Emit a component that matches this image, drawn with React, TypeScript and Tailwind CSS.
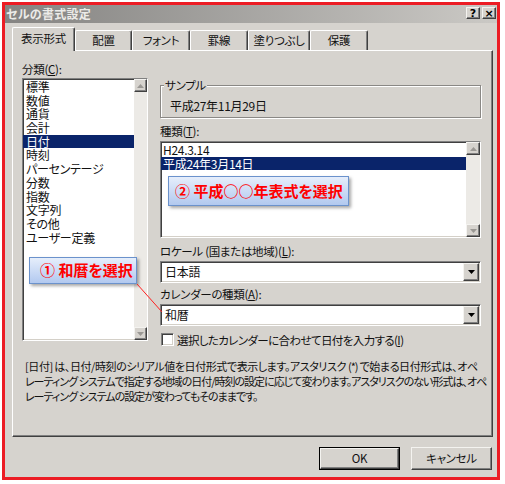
import React from "react";

const sunken =
  "border border-t-[#808080] border-l-[#808080] border-b-white border-r-white shadow-[inset_1px_1px_0_#404040,inset_-1px_-1px_0_#d4d0c8]";
const raised =
  "border border-t-[#f4f3f0] border-l-[#f4f3f0] border-b-[#404040] border-r-[#404040] shadow-[inset_-1px_-1px_0_#808080]";

function Arrow({ up, color }: { up?: boolean; color: string }) {
  return (
    <svg width="7" height="4" viewBox="0 0 7 4">
      {up ? <polygon points="3.5,0 7,4 0,4" fill={color} /> : <polygon points="0,0 7,0 3.5,4" fill={color} />}
    </svg>
  );
}

function ScrollBar({ wClass }: { wClass: string }) {
  return (
    <div className={`${wClass} h-full flex flex-col justify-between bg-[#eceae6]`}>
      <div className={`h-[13px] flex items-center justify-center bg-[#d6d3ce] ${raised}`}>
        <Arrow up color="#9a9894" />
      </div>
      <div className={`h-[13px] flex items-center justify-center bg-[#d6d3ce] ${raised}`}>
        <Arrow color="#9a9894" />
      </div>
    </div>
  );
}

function Combo({ text }: { text: string }) {
  return (
    <div className={`h-[22px] bg-white flex items-center ${sunken}`}>
      <span className="flex-1 pl-[4px] leading-[14px] text-[12px]">{text}</span>
      <div className={`w-[16px] h-[18px] mr-[1px] flex items-center justify-center bg-[#d6d3ce] ${raised}`}>
        <Arrow color="#000" />
      </div>
    </div>
  );
}

function Tab({ w, selected, children }: { w: string; selected?: boolean; children: React.ReactNode }) {
  return (
    <div
      className={`${w} ${
        selected ? "h-[24px] -mb-[1px] relative z-10 pt-[3px]" : "h-[20px] pt-[2px]"
      } bg-[#d6d3ce] border-l border-t border-r border-l-white border-t-white border-r-[#404040] rounded-t-[2px] shadow-[inset_-1px_0_0_#808080] flex justify-center leading-[14px] whitespace-nowrap`}
    >
      {children}
    </div>
  );
}

function TitleBtn({ children }: { children: React.ReactNode }) {
  return (
    <div
      className={`w-[14px] h-[12px] bg-[#d6d3ce] ${raised} flex items-center justify-center text-[11px] font-bold leading-none text-black tracking-normal font-['DejaVu_Sans',sans-serif]`}
    >
      {children}
    </div>
  );
}

const categories = [
  "標準",
  "数値",
  "通貨",
  "会計",
  "日付",
  "時刻",
  "パーセンテージ",
  "分数",
  "指数",
  "文字列",
  "その他",
  "ユーザー定義",
];

export default function App() {
  return (
    <div className="w-[505px] h-[484px] bg-white pt-[2px] pl-[2px] font-['Noto_Sans_CJK_JP',sans-serif] [font-feature-settings:'palt'] text-[11.5px] tracking-[-0.3px] text-[#111]">
      <div className="w-[498px] h-[478px] border-[3px] border-[#ec1c24] bg-[#d6d3ce] flex flex-col relative">
        {/* Title bar */}
        <div className="h-[18px] flex items-center bg-gradient-to-r from-[#858482] to-[#cbc9c5]">
          <span className="flex-1 pl-[1px] text-[12px] font-bold leading-none text-[#ecebe8] tracking-[0.3px]">セルの書式設定</span>
          <div className="flex gap-[2px] mr-[1px] -mt-[2px]">
            <TitleBtn>?</TitleBtn>
            <TitleBtn>×</TitleBtn>
          </div>
        </div>

        {/* Tabs */}
        <div className="flex items-end h-[23px] mt-[4px] ml-[7px]">
          <Tab w="w-[63px]" selected>
            表示形式
          </Tab>
          <Tab w="w-[57px]">配置</Tab>
          <Tab w="w-[58px]">フォント</Tab>
          <Tab w="w-[58px]">罫線</Tab>
          <Tab w="w-[62px]">塗りつぶし</Tab>
          <Tab w="w-[58px]">保護</Tab>
        </div>

        {/* Panel */}
        <div className="ml-[7px] w-[481px] h-[387px] border border-l-white border-t-white border-r-[#404040] border-b-[#404040] shadow-[inset_-1px_-1px_0_#808080] flex flex-col">
          <div className="flex pl-[9px] pt-[11px]">
            {/* Left column */}
            <div className="w-[126px] flex flex-col">
              <div className="h-[14px] leading-[14px]">
                分類(<u>C</u>):
              </div>
              <div className={`mt-[2px] h-[263px] bg-white flex ${sunken}`}>
                <div className="flex-1 pt-[1px] text-[12px]">
                  {categories.map((c) => (
                    <div
                      key={c}
                      className={`h-[13.7px] leading-[13.7px] pl-[3px] whitespace-nowrap ${
                        c === "日付" ? "bg-[#0a246a] text-white" : ""
                      }`}
                    >
                      {c}
                    </div>
                  ))}
                </div>
                <ScrollBar wClass="w-[13px]" />
              </div>
            </div>

            {/* Right column */}
            <div className="ml-[12px] w-[321px] mt-[23px] flex flex-col">
              <div className="relative h-[33px] border border-[#8a8885] shadow-[1px_1px_0_#ffffff,inset_1px_1px_0_#ffffff]">
                <span className="absolute -top-[8px] left-[3px] px-[1px] bg-[#d6d3ce] leading-[14px]">サンプル</span>
                <div className="pt-[13px] pl-[9px] leading-[14px] text-[12px]">平成27年11月29日</div>
              </div>

              <div className="mt-[6px] h-[14px] leading-[14px]">
                種類(<u>T</u>):
              </div>
              <div className={`mt-[3px] h-[97px] bg-white flex ${sunken}`}>
                <div className="flex-1 pt-[1px] text-[12px]">
                  <div className="h-[13.5px] leading-[13.5px] pl-[2px]">H24.3.14</div>
                  <div className="h-[13.5px] leading-[13.5px] pl-[2px] bg-[#0a246a] text-white">平成24年3月14日</div>
                </div>
                <ScrollBar wClass="w-[14px]" />
              </div>

              <div className="mt-[6px] h-[14px] leading-[14px] whitespace-nowrap">
                ロケール (国または地域)(<u>L</u>):
              </div>
              <div className="mt-[3px]">
                <Combo text="日本語" />
              </div>

              <div className="mt-[4px] h-[14px] leading-[14px] whitespace-nowrap">
                カレンダーの種類(<u>A</u>):
              </div>
              <div className="mt-[3px]">
                <Combo text="和暦" />
              </div>

              <div className="mt-[7px] h-[13px] flex items-center">
                <div className={`ml-[1px] w-[13px] h-[13px] bg-white ${sunken}`} />
                <span className="ml-[3px] leading-[14px] whitespace-nowrap tracking-[-0.6px]">
                  選択したカレンダーに合わせて日付を入力する(<u>I</u>)
                </span>
              </div>
            </div>
          </div>

          {/* Description */}
          <div className="ml-[12px] mt-[13px] leading-[15px] whitespace-nowrap text-[11px] tracking-[-1px]">
            <div className="w-[452px] [text-align-last:justify]">
              [日付] は、日付/時刻のシリアル値を日付形式で表示します。アスタリスク (*) で始まる日付形式は、オペ
            </div>
            <div className="w-[452px] [text-align-last:justify]">
              レーティング システムで指定する地域の日付/時刻の設定に応じて変わります。アスタリスクのない形式は、オペ
            </div>
            <div>レーティング システムの設定が変わってもそのままです。</div>
          </div>
        </div>

        {/* Buttons */}
        <div className="mt-[10px] flex justify-end gap-[11px] pr-[5px]">
          <div className="w-[81px] h-[23px] border border-black">
            <div className={`w-full h-full flex items-center justify-center ${raised}`}>OK</div>
          </div>
          <div className={`w-[81px] h-[23px] flex items-center justify-center ${raised}`}>キャンセル</div>
        </div>

        {/* Callout 2 */}
        <div className="absolute left-[163px] top-[171px] w-[181px] h-[30px] border border-[#6b92cc] bg-gradient-to-b from-[#e6eefb] to-[#b2c9ef] shadow-[2px_2px_3px_rgba(0,0,0,0.35)] flex items-center pl-[6px] text-[15px] font-bold text-[#ff0000] whitespace-nowrap tracking-normal">
          ② 平成○○年表式を選択
        </div>

        {/* Callout 1 */}
        <div className="absolute left-[24px] top-[252px] w-[108px] h-[27px] border border-[#6b92cc] bg-gradient-to-b from-[#e6eefb] to-[#b2c9ef] shadow-[2px_2px_3px_rgba(0,0,0,0.35)] flex items-center pl-[10px] text-[15px] font-bold text-[#ff0000] whitespace-nowrap tracking-normal">
          ① 和暦を選択
        </div>
        <svg className="absolute left-[130px] top-[277px]" width="30" height="32" viewBox="0 0 30 32">
          <line x1="2" y1="2" x2="27" y2="30" stroke="#ff2020" strokeWidth="1" />
        </svg>
      </div>
    </div>
  );
}
